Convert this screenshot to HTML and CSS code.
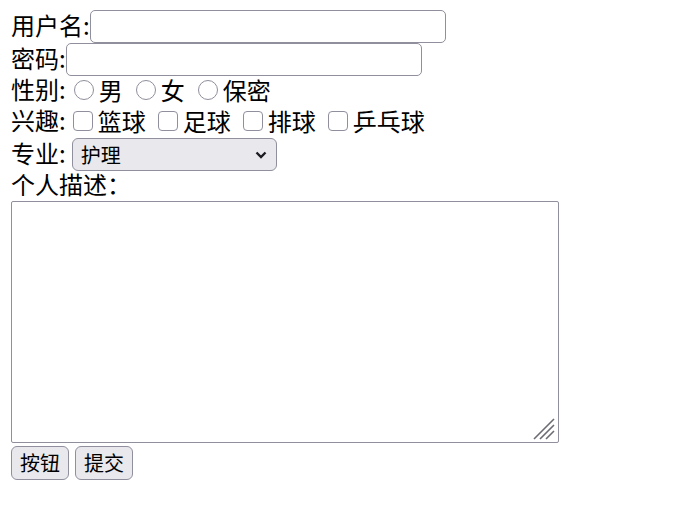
FILE: index.html
```html
<!DOCTYPE html>
<html lang="zh">
<head>
  <meta charset="UTF-8" />
  <meta name="viewport" content="width=device-width, initial-scale=1.0" />
  <title>注册</title>
  <link rel="stylesheet" href="styles.css">
</head>
<body>
  <form class="reg-form" action="#">
    <div class="row row-field">
      <span class="label">用户名:</span><input type="text" class="field">
    </div>
    <div class="row row-field">
      <span class="label">密码:</span><input type="password" class="field">
    </div>
    <div class="row row-choice">
      <span class="label">性别:</span>
      <label class="opt"><input type="radio" name="sex" class="radio">男</label>
      <label class="opt"><input type="radio" name="sex" class="radio">女</label>
      <label class="opt"><input type="radio" name="sex" class="radio">保密</label>
    </div>
    <div class="row row-check">
      <span class="label">兴趣:</span>
      <label class="opt"><input type="checkbox" class="check">篮球</label>
      <label class="opt"><input type="checkbox" class="check">足球</label>
      <label class="opt"><input type="checkbox" class="check">排球</label>
      <label class="opt"><input type="checkbox" class="check">乒乓球</label>
    </div>
    <div class="row row-field">
      <span class="label">专业:</span>
      <span class="select-wrap">
        <select class="major">
          <option>护理</option>
          <option>计算机</option>
          <option>会计</option>
        </select>
        <svg class="chevron" width="12" height="8" viewBox="0 0 12 8">
          <path d="M1.5 1.5 L6 6 L10.5 1.5" fill="none" stroke="#1c1b22" stroke-width="2.4" />
        </svg>
      </span>
    </div>
    <div class="row row-text"><span class="label">个人描述：</span></div>
    <div class="desc-wrap">
      <textarea class="desc"></textarea>
      <svg class="grip" width="24" height="24" viewBox="0 0 24 24">
        <path d="M2 22 L22 2 M8 22 L22 8 M14 22 L22 14" stroke="#6b6b73" stroke-width="1.6" />
      </svg>
    </div>
    <div class="actions">
      <input type="button" class="btn" value="按钮">
      <input type="submit" class="btn" value="提交">
    </div>
  </form>
</body>
</html>
```

FILE: styles.css
```css
body {
  margin: 10px 11px;
  font-family: "Noto Sans CJK SC", sans-serif;
  font-size: 24px;
  color: #000;
  background: #fff;
}
.row {
  display: flex;
  align-items: center;
  white-space: nowrap;
  line-height: 24px;
}
.row-field {
  height: 33px;
}
.row-choice {
  height: 30px;
}
.row-check {
  height: 32px;
}
.row-text {
  height: 30px;
}
.label {
  padding-bottom: 4px;
}
.field {
  box-sizing: border-box;
  width: 356px;
  height: 33px;
  margin: 0;
  border: 1px solid #8f8f9d;
  border-radius: 5px;
  background: #fff;
  font-size: 20px;
}
.opt {
  display: flex;
  align-items: center;
  margin-right: 5px;
  padding-bottom: 2px;
}
.radio,
.check {
  appearance: none;
  box-sizing: border-box;
  width: 20px;
  height: 20px;
  margin: 0 5px 0 7px;
  border: 1px solid #8f8f9d;
  background: #fff;
}
.radio {
  border-radius: 50%;
  margin-left: 8px;
}
.check {
  border-radius: 4px;
}
.select-wrap {
  position: relative;
  display: inline-block;
  margin-left: 6px;
}
.major {
  appearance: none;
  box-sizing: border-box;
  width: 205px;
  height: 33px;
  margin: 0;
  padding: 0 8px;
  border: 1px solid #8f8f9d;
  border-radius: 6px;
  background: #e9e9ed;
  color: #000;
  font-family: "Noto Sans CJK SC", sans-serif;
  font-size: 20px;
}
.chevron {
  position: absolute;
  right: 10px;
  top: 13px;
  pointer-events: none;
}
.desc-wrap {
  position: relative;
  width: 548px;
  height: 242px;
}
.desc {
  box-sizing: border-box;
  display: block;
  width: 548px;
  height: 242px;
  margin: 0;
  border: 1px solid #8f8f9d;
  border-radius: 2px;
  resize: none;
}
.grip {
  position: absolute;
  right: 3px;
  bottom: 2px;
  pointer-events: none;
}
.actions {
  display: flex;
  gap: 6px;
  margin-top: 3px;
}
.btn {
  box-sizing: border-box;
  height: 34px;
  margin: 0;
  padding: 0 8px;
  border: 1px solid #8f8f9d;
  border-radius: 6px;
  background: #e9e9ed;
  color: #000;
  font-family: "Noto Sans CJK SC", sans-serif;
  font-size: 20px;
  line-height: 1;
}
```
